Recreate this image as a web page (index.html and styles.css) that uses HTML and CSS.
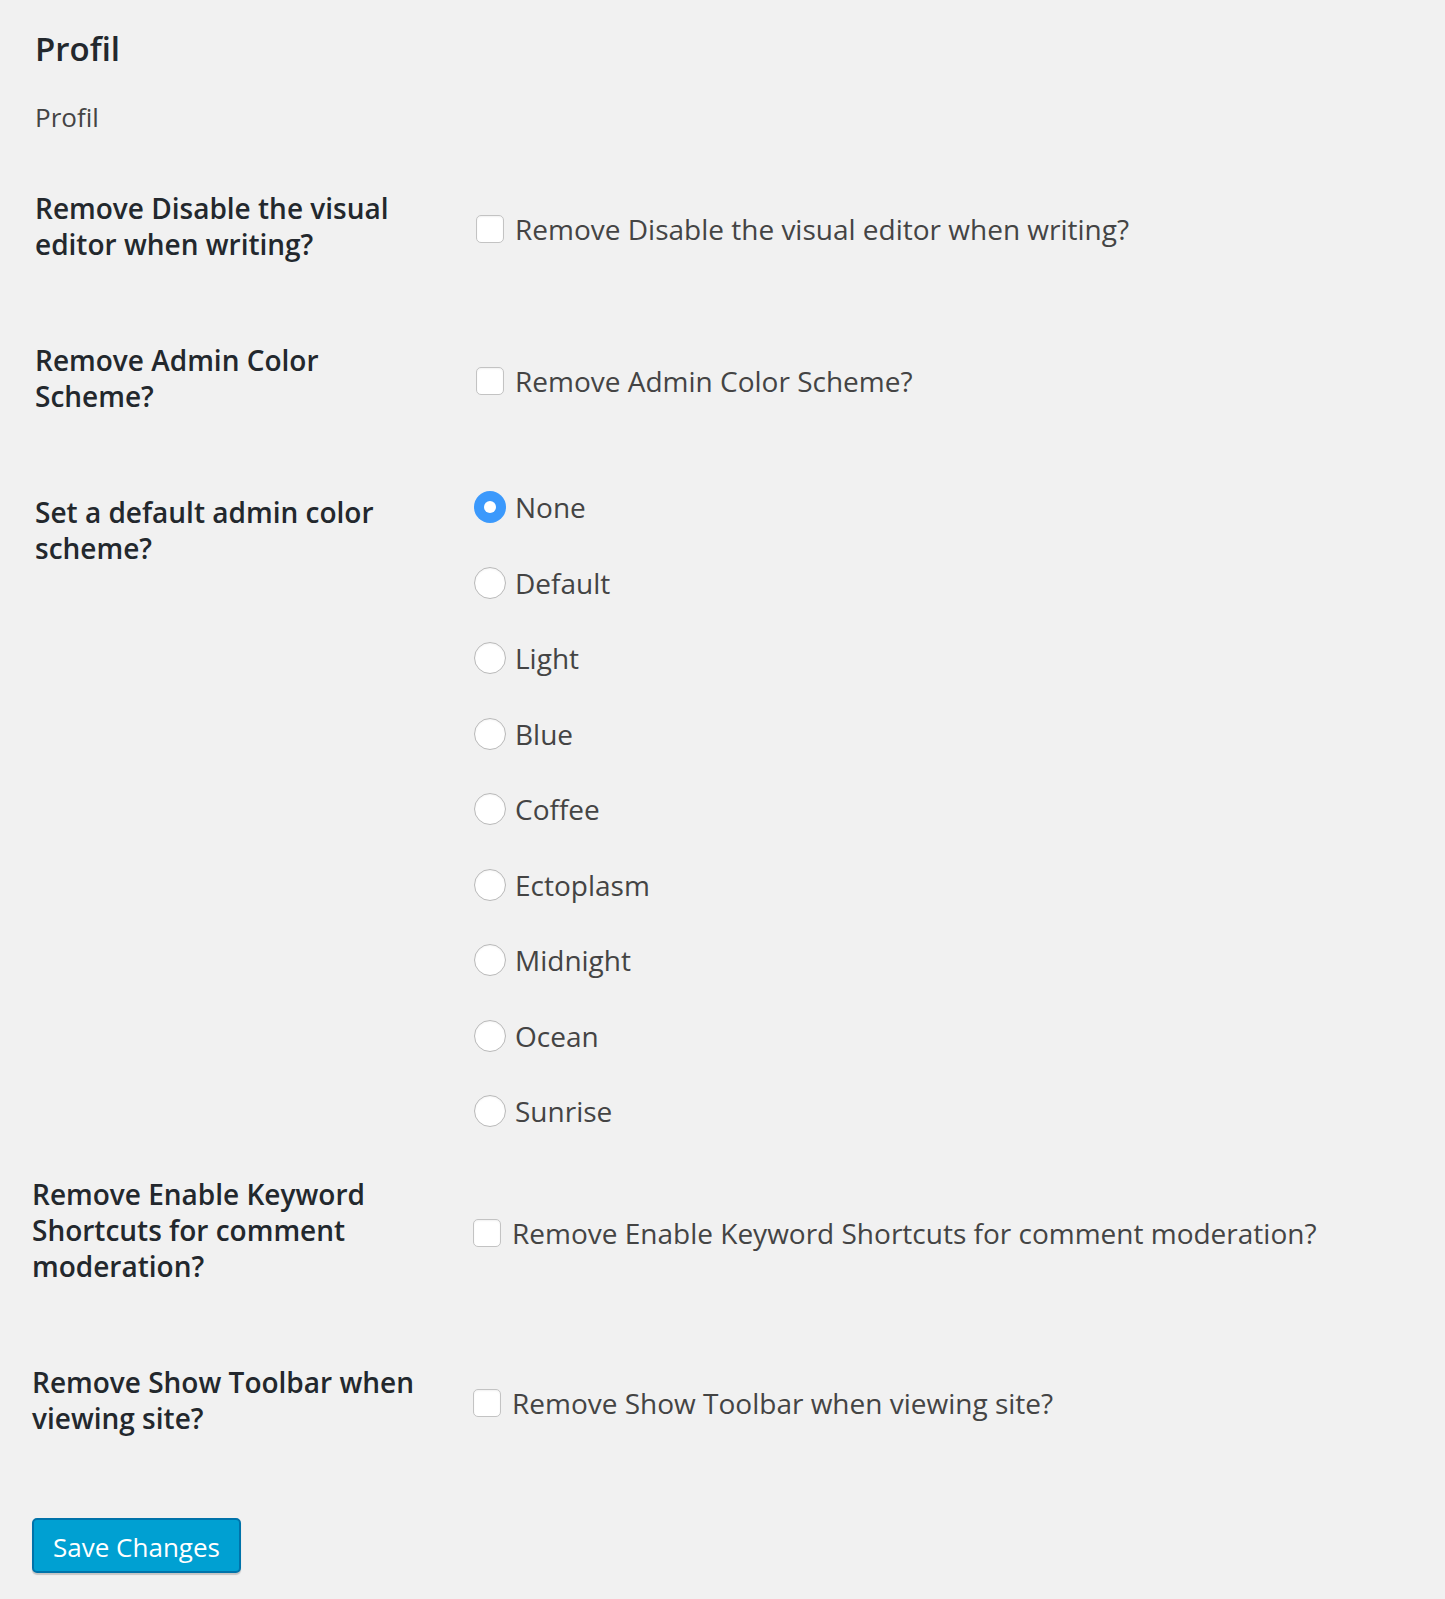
FILE: index.html
```html
<!DOCTYPE html>
<html lang="fr">
<head>
<meta charset="utf-8">
<title>Profil</title>
<link rel="stylesheet" href="styles.css">
</head>
<body>
<div class="wrap">
  <h2 class="title">Profil</h2>
  <p class="sub">Profil</p>

  <div class="form upper">
    <div class="row">
      <div class="th">Remove Disable the visual editor when writing?</div>
      <div class="td check-td">
        <label class="opt"><span class="cb"></span><span>Remove Disable the visual editor when writing?</span></label>
      </div>
    </div>
    <div class="row">
      <div class="th">Remove Admin Color Scheme?</div>
      <div class="td check-td">
        <label class="opt"><span class="cb"></span><span>Remove Admin Color Scheme?</span></label>
      </div>
    </div>
    <div class="row">
      <div class="th">Set a default admin color scheme?</div>
      <div class="td radio-td">
        <label class="ropt"><span class="rb checked"></span><span>None</span></label>
        <label class="ropt"><span class="rb"></span><span>Default</span></label>
        <label class="ropt"><span class="rb"></span><span>Light</span></label>
        <label class="ropt"><span class="rb"></span><span>Blue</span></label>
        <label class="ropt"><span class="rb"></span><span>Coffee</span></label>
        <label class="ropt"><span class="rb"></span><span>Ectoplasm</span></label>
        <label class="ropt"><span class="rb"></span><span>Midnight</span></label>
        <label class="ropt"><span class="rb"></span><span>Ocean</span></label>
        <label class="ropt"><span class="rb"></span><span>Sunrise</span></label>
      </div>
    </div>
  </div>

  <div class="form lower">
    <div class="row">
      <div class="th">Remove Enable Keyword Shortcuts for comment moderation?</div>
      <div class="td check-td">
        <label class="opt"><span class="cb"></span><span>Remove Enable Keyword Shortcuts for comment moderation?</span></label>
      </div>
    </div>
    <div class="row">
      <div class="th">Remove Show Toolbar when viewing site?</div>
      <div class="td check-td">
        <label class="opt"><span class="cb"></span><span>Remove Show Toolbar when viewing site?</span></label>
      </div>
    </div>
    <div class="submit">
      <button class="btn" type="button">Save Changes</button>
    </div>
  </div>
</div>
</body>
</html>
```

FILE: styles.css
```css
html, body {
  margin: 0;
  padding: 0;
  background: #f1f1f1;
}
body {
  font-family: "Open Sans", "Noto Sans", sans-serif;
  color: #444;
  min-height: 1599px;
}
.wrap {
  padding-top: 27px;
}
.title {
  margin: 0 0 0 35px;
  font-size: 33px;
  line-height: 44px;
  font-weight: 600;
  color: #23282d;
}
.sub {
  margin: 28px 0 0 35px;
  font-size: 26px;
  line-height: 36px;
  color: #444;
}
.form.upper {
  margin-top: 15px;
  padding-left: 35px;
  width: 1281px;
}
.form.lower {
  padding-left: 32px;
}
.row {
  display: grid;
  grid-template-columns: 441px 1fr;
}
.th {
  padding: 40px 20px 40px 0;
  font-size: 28px;
  line-height: 36px;
  font-weight: 600;
  color: #23282d;
  width: 386px;
}
.td {
  font-size: 28px;
  line-height: 36px;
  color: #444;
}
.check-td {
  display: flex;
  align-items: center;
  padding-top: 5px;
}
.opt, .ropt {
  display: flex;
  align-items: center;
}
.cb {
  box-sizing: border-box;
  width: 28px;
  height: 28px;
  flex: none;
  border: 1.5px solid #c3c3c3;
  border-radius: 5px;
  background: #fff;
  box-shadow: inset 0 1px 2px rgba(0,0,0,0.06);
  margin-right: 11px;
}
.radio-td {
  display: flex;
  flex-direction: column;
  gap: 35.5px;
  padding: 33px 0 5px;
}
.ropt {
  height: 40px;
  margin-left: -2px;
}
.rb {
  box-sizing: border-box;
  width: 32px;
  height: 32px;
  flex: none;
  border-radius: 50%;
  border: 1.5px solid #b9b9b9;
  background: #fff;
  box-shadow: inset 0 1px 2px rgba(0,0,0,0.05);
  margin-right: 9px;
  position: relative;
}
.rb.checked {
  border: none;
  background: #3b99fc;
  box-shadow: none;
}
.rb.checked::after {
  content: "";
  position: absolute;
  left: 10px;
  top: 10px;
  width: 12px;
  height: 12px;
  border-radius: 50%;
  background: #fff;
}
.submit {
  padding-top: 42px;
}
.btn {
  box-sizing: border-box;
  width: 209px;
  height: 55px;
  padding: 2px 0 0;
  border: 2px solid #0073aa;
  border-radius: 5px;
  background: #00a0d2;
  color: #fff;
  font-family: "Open Sans", "Noto Sans", sans-serif;
  font-size: 26px;
  line-height: 36px;
  box-shadow: 0 2px 1px rgba(0,0,0,0.18);
  cursor: pointer;
}
```
